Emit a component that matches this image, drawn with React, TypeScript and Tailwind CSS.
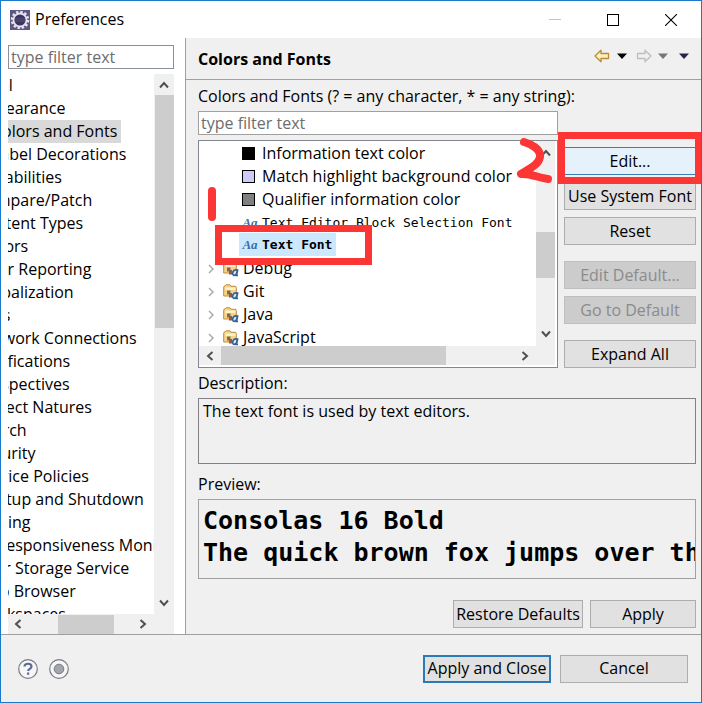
import React from "react";
import clsx from "clsx";

const prefTree = [
  { name: "General", level: 0 },
  { name: "Appearance", level: 1 },
  { name: "Colors and Fonts", level: 2, selected: true },
  { name: "Label Decorations", level: 2 },
  { name: "Capabilities", level: 1 },
  { name: "Compare/Patch", level: 1 },
  { name: "Content Types", level: 1 },
  { name: "Editors", level: 1 },
  { name: "Error Reporting", level: 1 },
  { name: "Globalization", level: 1 },
  { name: "Keys", level: 1 },
  { name: "Network Connections", level: 1 },
  { name: "Notifications", level: 1 },
  { name: "Perspectives", level: 1 },
  { name: "Project Natures", level: 1 },
  { name: "Search", level: 1 },
  { name: "Security", level: 1 },
  { name: "Service Policies", level: 1 },
  { name: "Startup and Shutdown", level: 1 },
  { name: "Tracing", level: 1 },
  { name: "UI Responsiveness Monitoring", level: 1 },
  { name: "User Storage Service", level: 1 },
  { name: "Web Browser", level: 1 },
  { name: "Workspaces", level: 1 },
];

const levelIndent = ["pl-0", "pl-[22px]", "pl-[38px]"];

function Chevron({ dir }: { dir: "up" | "down" | "left" | "right" }) {
  const d = {
    up: "M2 8.5 6 4l4 4.5",
    down: "M2 3.5 6 8l4-4.5",
    left: "M8.5 2 4 6l4.5 4",
    right: "M3.5 2 8 6l-4.5 4",
  }[dir];
  return (
    <svg viewBox="0 0 12 12" className="size-3 shrink-0" fill="none" stroke="#505050" strokeWidth="2">
      <path d={d} />
    </svg>
  );
}

function AaIcon() {
  return (
    <span aria-hidden className="w-4 shrink-0 pt-px text-center font-['Liberation_Serif',serif] text-[13px] leading-4 font-bold text-[#3a6ea5] italic">
      Aa
    </span>
  );
}

function FolderIcon() {
  return (
    <svg viewBox="0 0 16 16" className="size-4 shrink-0">
      <path d="M.7 12V3.200Q.7 2 2 1.800l1-1h4l1 1.500h4q1.300 0 1.300 1.200V12z" fill="#f5d48a" stroke="#bd8d3d" />
      <path d="M2.500 3.500h10v2.500h-10z" fill="#fdf1c7" />
      <path d="M4 6.500h3.500v4H4z" fill="#7d6b58" />
      <path d="M6 9h3v4.500H6z" fill="#a5523a" />
      <path d="M14.800 8.300 13.300 14.500h1.700M14 9.800q-1-1.400-2.800-.5-1.800 1.300-1.500 3.600.4 1.800 1.900 1.400 1.500-.6 2.200-2.300" fill="#dbe8f5" stroke="#2f6299" strokeWidth="1.700" />
    </svg>
  );
}

function Button({ children, className, ...rest }: React.ComponentProps<"button">) {
  return (
    <button
      type="button"
      className={clsx(
        "flex h-7 items-center justify-center border whitespace-nowrap disabled:border-[#bfbfbf] disabled:bg-[#cccccc] disabled:text-[#8b8b8b]",
        className ?? "border-[#adadad] bg-[#e1e1e1]",
      )}
      {...rest}
    >
      {children}
    </button>
  );
}

function NavArrow({ flip, stroke, fill }: { flip?: boolean; stroke: string; fill: string }) {
  return (
    <svg viewBox="0 0 16 14" className={clsx("h-[14px] w-4", flip && "-scale-x-100")}>
      <path d="M1 7 7 1.200V4.500h7.500v5H7v3.300z" fill={fill} stroke={stroke} strokeWidth="1.300" strokeLinejoin="round" />
    </svg>
  );
}

function Caret({ color }: { color: string }) {
  return (
    <svg viewBox="0 0 10 6" className="h-[6px] w-[10px]">
      <path d="M0 .5h10L5 6z" fill={color} />
    </svg>
  );
}

const swatches = [
  { name: "Information text color", color: "bg-black" },
  { name: "Match highlight background color", color: "bg-[#ceccf7]" },
  { name: "Qualifier information color", color: "bg-[#808080]" },
];

const groups = ["Debug", "Git", "Java", "JavaScript"];

export default function App() {
  return (
    <div className="relative flex h-screen flex-col overflow-hidden border border-[#1979ca] bg-[#f0f0f0] font-['Open_Sans','Noto_Sans',sans-serif] text-base leading-[23px] text-black">
      <header className="flex h-[37px] shrink-0 items-center bg-white pr-6 pl-[9px]">
        <svg viewBox="0 0 20 20" className="size-5">
          <rect width="20" height="20" fill="#5d5684" />
          <circle cx="10" cy="10" r="8" fill="none" stroke="#e4e2ec" strokeWidth="2.600" strokeDasharray="2.400 1.789" />
          <circle cx="10" cy="10" r="6.500" fill="#3b3560" stroke="#e4e2ec" strokeWidth="1.800" />
          <path d="M5 8.800h10M5 11h10" stroke="#59527c" />
        </svg>
        <h1 className="ml-[5px] flex-1">Preferences</h1>
        <div className="flex items-center gap-[46px]">
          <button type="button" aria-label="Minimize" className="h-px w-3 bg-[#c4c4c4]" />
          <button type="button" aria-label="Maximize" className="size-3 border border-black" />
          <button type="button" aria-label="Close">
            <svg viewBox="0 0 12 12" className="size-3" stroke="black" strokeWidth="1.100">
              <path d="M0 0l12 12M12 0 0 12" />
            </svg>
          </button>
        </div>
      </header>

      <main className="flex min-h-0 flex-1 border-b border-[#a0a0a0]">
        <aside className="flex w-[185px] shrink-0 flex-col border-r border-[#a0a0a0] bg-white pt-[7px] pr-[11px] pl-[7px]">
          <input aria-label="Filter preferences" placeholder="type filter text" className="h-6 w-full shrink-0 border border-[#8a8f9c] bg-white px-[2px] placeholder:text-[#6d6d6d]" />
          <div className="mt-[5px] flex min-h-0 flex-1">
            <ul className="min-w-0 flex-1 overflow-hidden">
              {prefTree.map((item) => (
                <li key={item.name} className={clsx("-ml-[54px] flex h-[23px] whitespace-nowrap", levelIndent[item.level])}>
                  <span className={clsx("pr-1", item.selected && "bg-[#d9d9d9]")}>{item.name}</span>
                </li>
              ))}
            </ul>
            <div className="flex w-5 shrink-0 flex-col items-center justify-between bg-[#f0f0f0] pb-[5px]">
              <div className="flex w-full flex-col items-center">
                <div className="flex h-[21px] items-center"><Chevron dir="up" /></div>
                <div className="h-[233px] w-[19px] bg-[#cdcdcd]" />
              </div>
              <Chevron dir="down" />
            </div>
          </div>
          <div className="flex h-[20px] shrink-0 items-center bg-[#f0f0f0] pr-[25px] pl-1">
            <Chevron dir="left" />
            <div className="ml-[34px] h-[19px] w-14 bg-[#cdcdcd]" />
            <span className="flex-1" />
            <Chevron dir="right" />
          </div>
        </aside>

        <section className="flex min-w-0 flex-1 flex-col">
          <div className="flex h-[42px] shrink-0 items-center border-b border-[#a0a0a0] pr-3 pl-3">
            <h2 className="flex-1 pt-[2px] font-bold">Colors and Fonts</h2>
            <div className="flex items-center gap-[6px] pb-[6px]">
              <button type="button" aria-label="Back" className="mr-px"><NavArrow stroke="#b98a35" fill="#fdf0bf" /></button>
              <Caret color="#000" />
              <button type="button" aria-label="Forward" className="ml-[3px]"><NavArrow flip stroke="#bdbdbd" fill="#f0f0f0" /></button>
              <Caret color="#777" />
              <span className="ml-[5px] flex"><Caret color="#24244a" /></span>
            </div>
          </div>

          <div className="flex min-h-0 flex-1 flex-col pt-[5px] pr-[5px] pl-3">
            <label htmlFor="filter" className="whitespace-nowrap">Colors and Fonts (? = any character, * = any string):</label>
            <div className="mt-[3px] flex gap-[6px]">
              <div className="min-w-0 flex-1">
                <input id="filter" placeholder="type filter text" className="h-6 w-full border border-[#a0a0a0] bg-white px-[2px] placeholder:text-[#6d6d6d]" />
                <div className="mt-[5px] flex h-[228px] flex-col border border-[#828790] bg-white pr-[2px] pb-[2px]">
                  <div className="flex min-h-0 flex-1">
                    <ul className="min-w-0 flex-1 overflow-hidden pt-px">
                      {swatches.map((s) => (
                        <li key={s.name} className="flex h-[23px] items-center pl-[43px] whitespace-nowrap">
                          <span className={clsx("mr-[7px] size-[13px] shrink-0 border border-black", s.color)} />
                          {s.name}
                        </li>
                      ))}
                      <li className="flex h-[22px] items-center gap-1 pl-[43px] font-['DejaVu_Sans_Mono',monospace] text-[13px] whitespace-nowrap">
                        <AaIcon />Text Editor Block Selection Font
                      </li>
                      <li className="flex h-6 pl-10 font-['DejaVu_Sans_Mono',monospace] text-[13px] font-bold whitespace-nowrap">
                        <span className="mb-px flex items-center gap-1 bg-[#cce8ff] pr-1 pl-[3px]"><AaIcon />Text Font</span>
                      </li>
                      {groups.map((g) => (
                        <li key={g} className="flex h-[23px] items-center pl-2">
                          <svg viewBox="0 0 8 12" className="h-3 w-2" fill="none" stroke="#a6a6a6" strokeWidth="1.400">
                            <path d="M2 2l4 4-4 4" />
                          </svg>
                          <span className="mr-1 ml-2 flex"><FolderIcon /></span>
                          {g}
                        </li>
                      ))}
                    </ul>
                    <div className="flex w-[19px] shrink-0 flex-col items-center justify-between bg-[#f0f0f0] pt-[6px] pb-[6px]">
                      <Chevron dir="up" />
                      <div className="mt-[23px] h-[46px] w-full bg-[#cdcdcd]" />
                      <Chevron dir="down" />
                    </div>
                  </div>
                  <div className="flex h-[19px] shrink-0 items-center bg-[#f0f0f0] pr-6 pl-[5px]">
                    <Chevron dir="left" />
                    <div className="ml-[5px] h-full w-[225px] bg-[#cdcdcd]" />
                    <span className="flex-1" />
                    <Chevron dir="right" />
                  </div>
                </div>
              </div>
              <div className="flex w-[132px] shrink-0 flex-col gap-[7px] pt-9">
                <Button className="border-[#3c7fb1] bg-[#e5f1fb]">Edit...</Button>
                <Button>Use System Font</Button>
                <Button>Reset</Button>
                <div className="my-[9px] flex flex-col gap-[7px]">
                  <Button disabled>Edit Default...</Button>
                  <Button disabled>Go to Default</Button>
                </div>
                <Button>Expand All</Button>
              </div>
            </div>

            <label htmlFor="description" className="mt-1">Description:</label>
            <textarea id="description" readOnly value="The text font is used by text editors." className="mt-[3px] h-[66px] w-full shrink-0 resize-none border border-[#828282] bg-[#f0f0f0] px-1 py-px" />
            <h3 className="mt-[9px]">Preview:</h3>
            <div className="mt-[3px] h-20 shrink-0 overflow-hidden border border-[#a0a0a0] px-1 pt-[5px] font-['DejaVu_Sans_Mono',monospace] text-[25px] leading-8 font-bold whitespace-nowrap">
              <p>Consolas 16 Bold</p>
              <p>The quick brown fox jumps over the lazy dog.</p>
            </div>
            <div className="mt-[21px] flex justify-end gap-[7px]">
              <Button className="w-[130px] border-[#adadad] bg-[#e1e1e1]">Restore Defaults</Button>
              <Button className="w-[106px] border-[#adadad] bg-[#e1e1e1]">Apply</Button>
            </div>
          </div>
        </section>
      </main>

      <footer className="flex h-[67px] shrink-0 items-center pr-[13px] pl-[17px]">
        <button type="button" aria-label="Help">
          <svg viewBox="0 0 20 20" className="size-5">
            <circle cx="10" cy="10" r="9.300" fill="#f6f6f8" stroke="#7a7a84" strokeWidth="1.200" />
            <path d="M6.500 7.500C6.500 3.800 13.500 3.800 13.500 7.500c0 2.300-3.400 2.300-3.400 4.500M10.100 13.600v2.200" fill="none" stroke="#5a6a98" strokeWidth="2.200" />
          </svg>
        </button>
        <button type="button" aria-label="Record preferences" className="ml-[11px]">
          <svg viewBox="0 0 20 20" className="size-5">
            <circle cx="10" cy="10" r="9.300" fill="#f6f6f8" stroke="#7a7a84" strokeWidth="1.200" />
            <circle cx="10" cy="10" r="4.800" fill="#a3a7ab" stroke="#777b80" />
          </svg>
        </button>
        <span className="flex-1" />
        <Button className="w-32 border-2 border-[#2a7ab8] bg-[#e1e1e1]">Apply and Close</Button>
        <Button className="ml-[9px] w-32 border-[#adadad] bg-[#e1e1e1]">Cancel</Button>
      </footer>

      <svg viewBox="0 0 702 703" className="pointer-events-none absolute -top-px -left-px h-[703px] w-[702px]" fill="none" stroke="#fc3535">
        <rect x="218.500" y="228.500" width="150" height="33" strokeWidth="7" />
        <rect x="561.500" y="135.500" width="137" height="45" strokeWidth="7" />
        <path d="M212 191v26" strokeWidth="8" strokeLinecap="round" />
        <path d="M524 142c7 2 17 7 16 15-1 7-9 11-19 17 9-1 18 4 27 5" strokeWidth="8" strokeLinecap="round" strokeLinejoin="round" />
      </svg>
    </div>
  );
}
